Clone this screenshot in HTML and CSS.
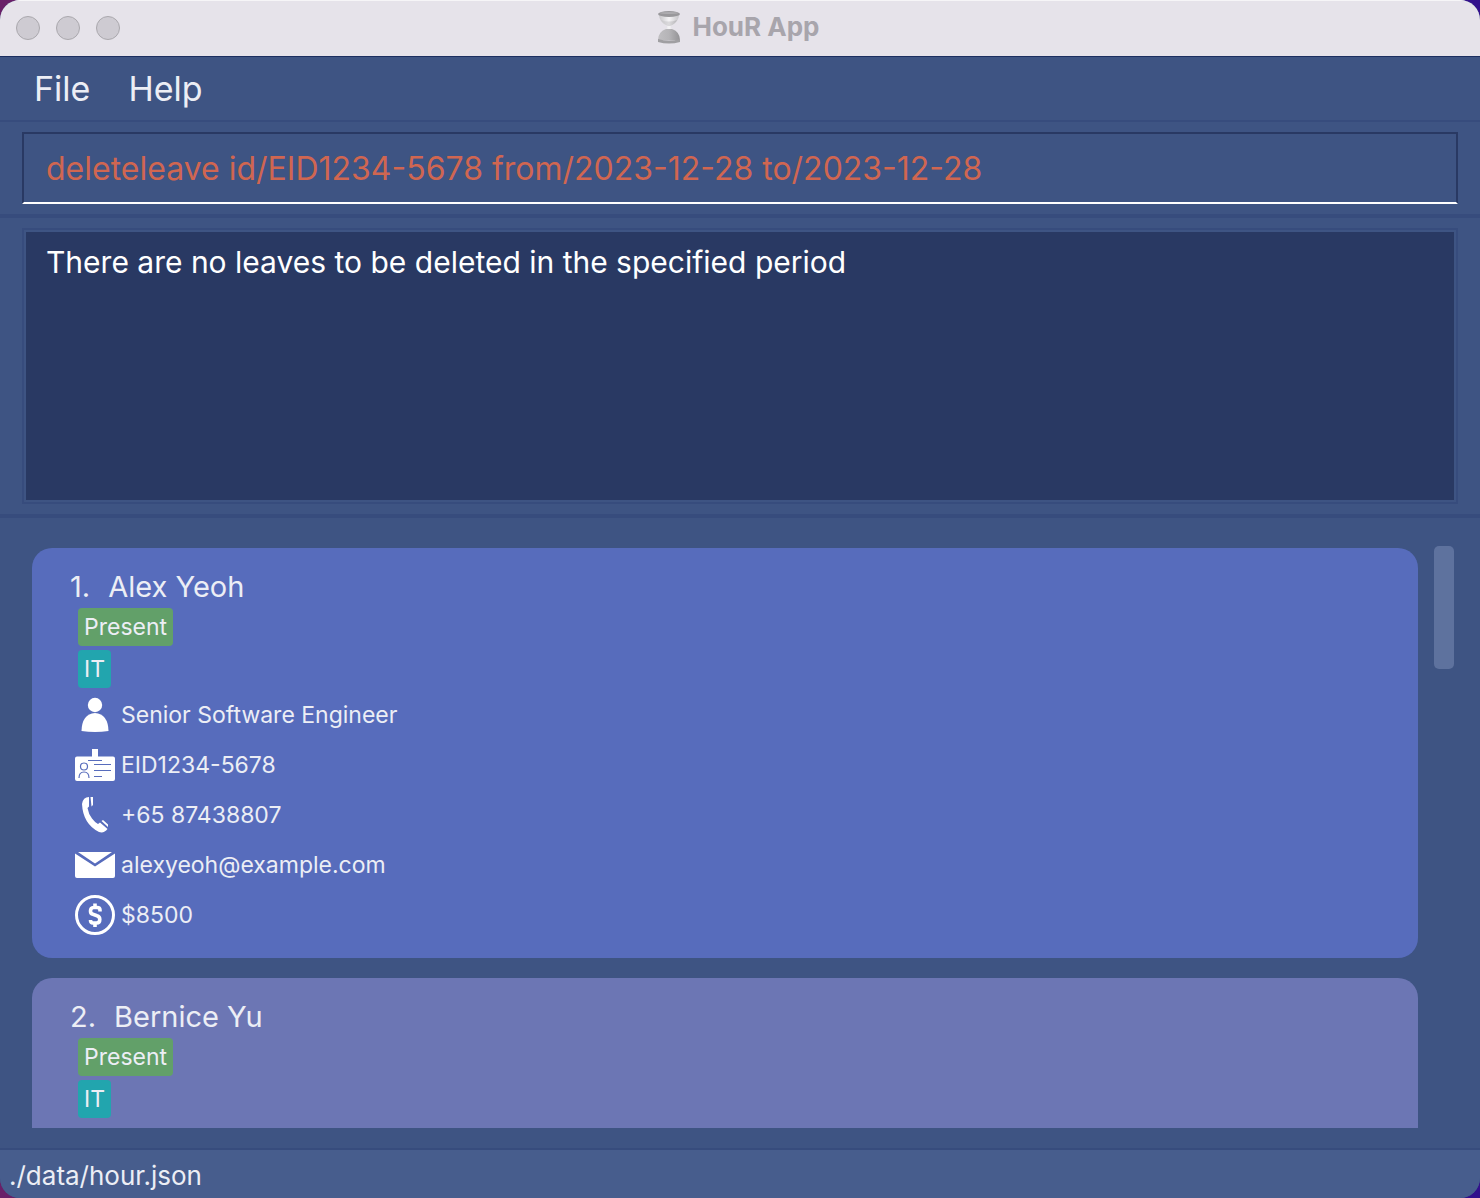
FILE: index.html
```html
<!DOCTYPE html>
<html lang="en">
<head>
<meta charset="utf-8">
<meta name="viewport" content="width=device-width, initial-scale=1">
<title>HouR App</title>
<link rel="stylesheet" href="styles.css">
</head>
<body>
<svg class="symbols" aria-hidden="true">
  <symbol id="icon-person" viewBox="0 0 40 40"><circle cx="20" cy="10" r="7.200"/><path d="M6.500 36Q7 19 20 18Q33 19 33.500 36Q20 38 6.500 36Z"/></symbol>
  <symbol id="icon-badge" viewBox="0 0 40 40">
    <path d="M2 11.500H17V4H23V11.500H38Q40 11.500 40 13.500V34Q40 36 38 36H2Q0 36 0 34V13.500Q0 11.500 2 11.500Z"/>
    <g class="cut"><path d="M13 15.500H27M19 19.500H36M19 25.500H36M19 31.500H27M4 33Q4 27 9 27Q14 27 14 33"/><circle cx="9" cy="21.500" r="3.500"/></g>
  </symbol>
  <symbol id="icon-phone" viewBox="0 0 40 40"><path d="M7 9Q8 2 14 2V11.500L12.500 13Q13.500 19 17 23.500Q20 27.500 23 29L25 27.500L32.500 34Q29 38.500 24 37Q8 29 7 9Z"/><path d="M15.500 2H18V10L16.500 11.500ZM26.500 26L28 25L33 29.500V32Z"/></symbol>
  <symbol id="icon-mail" viewBox="0 0 40 40"><path d="M3 7H37L20 18.500ZM0 8.500L20 21.500L40 8.500V31Q40 33 38 33H2Q0 33 0 31Z"/></symbol>
  <symbol id="icon-money" viewBox="0 0 40 40"><g class="ring"><circle cx="20" cy="20" r="18.500"/><path class="dollar" d="M25 16.500V15Q25 12.500 22 12.500H18.500Q15.500 12.500 15.500 16Q15.500 18.800 18 19.300L22 20.700Q24.800 21.500 24.800 24.500Q24.800 28 21.500 28H18Q15.500 28 15.500 25M20 8.500V12.500M20 28V32"/></g></symbol>
</svg>
<header class="titlebar">
  <div class="lights"><button aria-label="Close"></button><button aria-label="Minimize"></button><button aria-label="Zoom"></button></div>
  <svg class="hourglass" viewBox="0 0 24 34" aria-hidden="true">
    <defs>
      <linearGradient id="glass"><stop offset="0" stop-color="#c6c5c8"/><stop offset=".5" stop-color="#f5f4f6"/><stop offset="1" stop-color="#c6c5c8"/></linearGradient>
      <linearGradient id="sand"><stop offset="0" stop-color="#c0bfc2"/><stop offset=".5" stop-color="#b5b4b7"/><stop offset="1" stop-color="#939295"/></linearGradient>
    </defs>
    <path fill="url(#glass)" d="M2 4H22Q22 12 14 16V18Q22 21 22 30H2Q2 21 10 18V16Q2 12 2 4Z"/>
    <path fill="url(#sand)" d="M4 10Q12 13 20 10Q18 14 13 16H11Q6 14 4 10Z" opacity=".4"/>
    <path fill="url(#sand)" d="M1 30Q1 22 9 19H15Q23 22 23 30Z"/>
    <ellipse cx="12" cy="4" rx="11" ry="3" fill="#99989b"/><ellipse cx="12" cy="3" rx="9" ry="1" fill="#adacaf"/>
    <path d="M1 29Q12 32 23 29V32Q12 35 1 32Z" fill="#a09fa2"/>
  </svg>
  <h1>HouR App</h1>
</header>
<nav class="menubar"><button>File</button><button>Help</button></nav>
<form class="command"><input type="text" aria-label="Command" value="deleteleave id/EID1234-5678 from/2023-12-28 to/2023-12-28"></form>
<section class="result"><textarea readonly aria-label="Result">There are no leaves to be deleted in the specified period</textarea></section>
<main class="list-pane">
  <ol class="employees">
    <li class="card">
      <h2><span>1.</span><span>Alex Yeoh</span></h2>
      <div class="tags"><span class="tag present">Present</span></div>
      <div class="tags"><span class="tag department">IT</span></div>
      <p><svg><use href="#icon-person"/></svg>Senior Software Engineer</p>
      <p><svg><use href="#icon-badge"/></svg>EID1234-5678</p>
      <p><svg><use href="#icon-phone"/></svg>+65 87438807</p>
      <p><svg><use href="#icon-mail"/></svg>alexyeoh@example.com</p>
      <p><svg><use href="#icon-money"/></svg>$8500</p>
    </li>
    <li class="card">
      <h2><span>2.</span><span>Bernice Yu</span></h2>
      <div class="tags"><span class="tag present">Present</span></div>
      <div class="tags"><span class="tag department">IT</span></div>
    </li>
  </ol>
  <div class="scrollbar"><div class="thumb"></div></div>
</main>
<footer class="statusbar">./data/hour.json</footer>
</body>
</html>
```
FILE: styles.css
```css
* { box-sizing: border-box; }
html { background: linear-gradient(90deg, #6a1f68, #32108c); }
body {
  margin: 0;
  height: 100vh;
  display: flex;
  flex-direction: column;
  overflow: hidden;
  border-radius: 20px;
  background: #3e5483;
  color: #eceef5;
  font-family: Inter, "Liberation Sans", sans-serif;
}
button, input, textarea { font: inherit; color: inherit; margin: 0; }
h1, h2, p, ol { margin: 0; padding: 0; font-weight: 400; }
.symbols { display: none; }

.titlebar {
  flex: none;
  height: 57px;
  display: grid;
  grid-template-columns: 1fr auto auto 1fr;
  align-items: center;
  column-gap: 12px;
  padding: 0 20px 4px 16px;
  background: #e6e3ea;
  border-top: 1px solid #f6f5f7;
  border-bottom: 1px solid #1c2f60;
}
.lights { display: flex; gap: 16px; padding-top: 2px; }
.lights button {
  width: 24px;
  height: 24px;
  padding: 0;
  border: 1px solid #aaa8ad;
  border-radius: 50%;
  background: #cecbd2;
}
.hourglass { width: 24px; height: 34px; }
.titlebar h1 { font-size: 26px; font-weight: 700; line-height: 32px; color: #a8a5ac; }

.menubar {
  flex: none;
  height: 65px;
  display: flex;
  gap: 38px;
  padding: 0 34px;
  border-bottom: 2px solid #374c7d;
}
.menubar button { padding: 0; border: 0; background: none; font-size: 34px; }

.command { flex: none; padding: 10px 22px; border-bottom: 4px solid #374c7d; }
.command input {
  display: block;
  width: 100%;
  height: 72px;
  padding: 0 22px;
  border: 2px solid #293963;
  border-bottom-color: #fff;
  background: none;
  color: #d06651;
  font-size: 32px;
}

.result { flex: none; padding: 10px 22px; border-bottom: 4px solid #374c7d; }
.result textarea {
  display: block;
  width: 100%;
  height: 276px;
  padding: 10px 22px;
  border: 2px solid #374c7d;
  outline: 2px solid #3e5483;
  outline-offset: -4px;
  resize: none;
  background: #293963;
  color: #fff;
  font-size: 30px;
  line-height: 44px;
}

.list-pane {
  flex: 1;
  min-height: 0;
  display: flex;
  gap: 16px;
  padding: 28px 26px 20px 32px;
  border-bottom: 2px solid #374c7d;
}
.employees {
  flex: 1;
  display: flex;
  flex-direction: column;
  gap: 20px;
  padding-top: 2px;
  overflow: hidden;
  list-style: none;
}
.card { flex: none; min-height: 410px; padding: 18px 38px; border-radius: 20px; background: #576cbc; }
.card:nth-child(even) { background: #6c76b4; }
.card h2 { display: flex; gap: 18px; font-size: 29px; line-height: 42px; }
.tags { display: flex; height: 38px; margin: 0 0 4px 8px; }
.tag { padding: 0 6px; border-radius: 4px; font-size: 23px; line-height: 38px; }
.present { background: #62a069; }
.department { background: #22a5ae; }
.card p { display: flex; align-items: center; gap: 6px; height: 50px; margin-left: 5px; font-size: 23px; }
.card .tags + p { margin-top: -2px; }
.card svg { flex: none; width: 40px; height: 40px; fill: #fff; }
.cut { fill: none; stroke: #576cbc; stroke-width: 1.2; }
.ring { fill: none; stroke: #fff; stroke-width: 3; }
.dollar { stroke-width: 3.6; }
.scrollbar { flex: none; width: 20px; }
.thumb { height: 123px; border-radius: 5px; background: #5e729e; }

.statusbar { flex: none; height: 48px; padding: 0 9px; background: #475d8d; font-size: 26px; line-height: 52px; }
```
